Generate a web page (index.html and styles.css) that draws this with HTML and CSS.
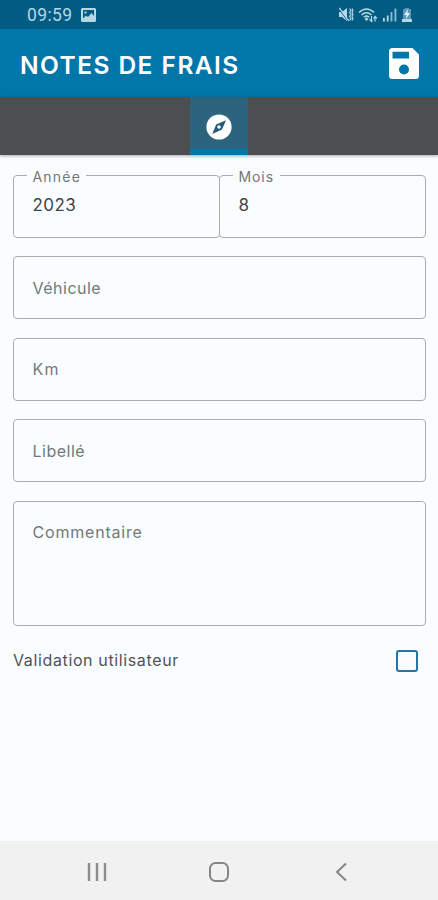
FILE: index.html
```html
<!DOCTYPE html>
<html lang="fr">
<head>
<meta charset="utf-8">
<title>Notes de frais</title>
<link rel="stylesheet" href="styles.css">
</head>
<body>
<div class="screen">
  <div class="status">
    <span class="clock">09:59</span>
    <svg class="picture" width="15" height="14" viewBox="0 0 15 14"><path fill-rule="evenodd" fill="currentColor" d="M1.5 0h12A1.5 1.5 0 0 1 15 1.5v11a1.5 1.5 0 0 1-1.5 1.5h-12A1.5 1.5 0 0 1 0 12.500v-11A1.500 1.500 0 0 1 1.500 0zM2 2v8.500l3-3 2 1.500 3.500-4L13 8V2zM3.500 3.500h2v2h-2z"/></svg>
    <div class="status-icons">
      <svg width="16" height="16" viewBox="0 0 16 16" fill="none" stroke="currentColor"><path d="M1 5h3l5-4v13l-5-4H1z" fill="currentColor" stroke="none"/><path d="M.5 1.500l10 13" stroke="#015b83" stroke-width="1.200"/><path d="M1.300.800l9.500 13" stroke-width="1.300"/><path d="M11.500 1.500l1.500 2-1.500 2 1.500 2-1.500 2 1.500 2-1.500 2M14 1.500l1 2-1 2 1 2-1 2 1 2-1 2" stroke-width="1.200"/></svg>
      <svg width="20" height="16" viewBox="0 0 20 16" fill="none" stroke="currentColor" stroke-width="1.500"><path d="M1 5.500q7.500-7 15 0M3.500 8q5-4.500 10 0M5.800 10.300q2.700-2.400 5.400 0"/><path d="M8.500 10.500l2 1.500-2 2-2-2z" fill="currentColor" stroke="none"/><path d="M13.500 9v5m-2-2l2 2.500 1-1M17 14.500v-5m-1.500 2l1.500-2 2 2" stroke-width="1.200"/></svg>
      <svg width="14" height="16" viewBox="0 0 14 16" fill="currentColor"><path d="M0 11h1.800v3.500H0zM3.800 8.500h1.800v6H3.800z"/><path d="M7.600 5h1.800v9.500H7.600zM11.500 1.500h1.800v13h-1.800z" opacity=".8"/></svg>
      <svg width="12" height="16" viewBox="0 0 12 16"><path d="M4 1h4v1h2v10H2V2h2z" fill="currentColor" opacity=".5"/><path d="M1 12h10v3H1z" fill="currentColor"/><path d="M7 2L3 8h2.500L5 12l4-6H6.500z" fill="#e3f3f8"/></svg>
    </div>
  </div>
  <header class="appbar">
    <h1>NOTES DE FRAIS</h1>
    <svg width="30" height="31" viewBox="0 0 30 31"><path fill="#fff" fill-rule="evenodd" d="M3.500 0h20L30 6.500v21a3.500 3.500 0 0 1-3.500 3.500h-23A3.500 3.500 0 0 1 0 27.500v-24A3.500 3.500 0 0 1 3.500 0zM3.500 3.800v6.700H20V3.800zM15 16.500a5 5 0 1 0 0 10 5 5 0 0 0 0-10z"/></svg>
  </header>
  <nav class="tabs">
    <div class="tab">
      <svg width="26" height="26" viewBox="0 0 26 26"><circle cx="13" cy="13" r="12.600" fill="#fff"/><path fill="#245973" fill-rule="evenodd" d="M20 6.200l-4 9.300L6.200 20l4-9.500zM13 11.200a1.800 1.800 0 1 0 0 3.600 1.800 1.800 0 0 0 0-3.600z"/></svg>
    </div>
  </nav>
  <main class="form">
    <div class="pair">
      <div class="field"><span class="label label-year"><span>Année</span></span><span class="value year">2023</span></div>
      <div class="field"><span class="label label-month"><span>Mois</span></span><span class="value">8</span></div>
    </div>
    <div class="field"><span class="hint vehicle">Véhicule</span></div>
    <div class="field"><span class="hint km">Km</span></div>
    <div class="field"><span class="hint wording">Libellé</span></div>
    <div class="field comment"><span class="hint remark">Commentaire</span></div>
    <div class="check-row"><span class="check-label">Validation utilisateur</span><span class="checkbox"></span></div>
  </main>
  <footer class="navbar">
    <svg width="20" height="20" viewBox="0 0 20 20" stroke="#8d8d8d" stroke-width="2.400"><path d="M2 1v18M10 1v18M18 1v18"/></svg>
    <svg width="22" height="22" viewBox="0 0 22 22" fill="none" stroke="#858585" stroke-width="2"><rect x="2" y="2" width="18" height="18" rx="5.500"/></svg>
    <svg width="20" height="20" viewBox="0 0 20 20" fill="none" stroke="#858585" stroke-width="2"><path d="M15 1.500L6 10l9 8.500"/></svg>
  </footer>
</div>
</body>
</html>
```
FILE: styles.css
```css
* { box-sizing: border-box; }
body { margin: 0; font-family: Inter, sans-serif; }
svg { display: block; flex: none; }
.screen {
  width: 438px;
  height: 900px;
  display: flex;
  flex-direction: column;
  background: #f9fdff;
  overflow: hidden;
}
.status {
  height: 29px;
  flex: none;
  display: flex;
  align-items: center;
  padding: 1px 25px 0 27px;
  background: #015b83;
  color: #b5d8e5;
}
.clock { font: 17.5px/20px Roboto, sans-serif; width: 54px; letter-spacing: .4px; }
.status-icons { display: flex; gap: 4.500px; margin-left: auto; }
.appbar {
  height: 68px;
  flex: none;
  display: flex;
  align-items: center;
  justify-content: space-between;
  padding: 1px 19px 0 20px;
  background: #0076a9;
}
h1 { margin: 3px 0 0; font-size: 24.5px; line-height: 30px; font-weight: 600; letter-spacing: 1.45px; color: #fff; white-space: nowrap; }
.tabs {
  height: 58px;
  flex: none;
  display: flex;
  justify-content: center;
  background: #4c4f52;
  box-shadow: 0 1px 3px rgba(0, 0, 0, .35);
}
.tab {
  width: 58px;
  display: flex;
  justify-content: center;
  padding-top: 17px;
  background: #2c647d;
  border-bottom: 6px solid #0078ad;
}
.form { flex: 1; display: flex; flex-direction: column; gap: 18.5px; padding: 19.5px 12px 0 13px; }
.pair { display: flex; }
.pair .field { flex: 1; padding-bottom: 2px; }
.pair .field + .field { margin-left: -1px; }
.field {
  position: relative;
  height: 63px;
  flex: none;
  padding: 0 18.5px;
  border: 1px solid #aaadaf;
  border-radius: 4px;
  display: flex;
  align-items: center;
  font-size: 16px;
  line-height: 20px;
}
.comment { height: 125px; align-items: flex-start; padding-top: 20px; }
.label {
  position: absolute;
  left: 13px;
  top: -9px;
  height: 18px;
  padding-left: 5.500px;
  background: #f9fdff;
  color: #737779;
  font-size: 14px;
  line-height: 20px;
}
.label-year { width: 59px; letter-spacing: 1.200px; }
.label-month { width: 47px; letter-spacing: .9px; }
.value { color: #424547; font-size: 17px; }
.year { letter-spacing: .4px; }
.hint { color: #74787a; }
.vehicle { letter-spacing: .5px; }
.km { letter-spacing: 1.200px; }
.wording { letter-spacing: .5px; }
.remark { letter-spacing: .8px; }
.check-row { display: flex; align-items: center; justify-content: space-between; height: 32px; padding-right: 8px; }
.check-label { font-size: 16px; line-height: 20px; letter-spacing: .63px; color: #505355; }
.checkbox { width: 22px; height: 22px; border: 2px solid #2476a0; border-radius: 3px; margin-top: 1px; }
.navbar {
  height: 59px;
  flex: none;
  display: flex;
  justify-content: space-between;
  align-items: center;
  padding: 3px 87px 0 87px;
  background: #f1f1f1;
}
```
